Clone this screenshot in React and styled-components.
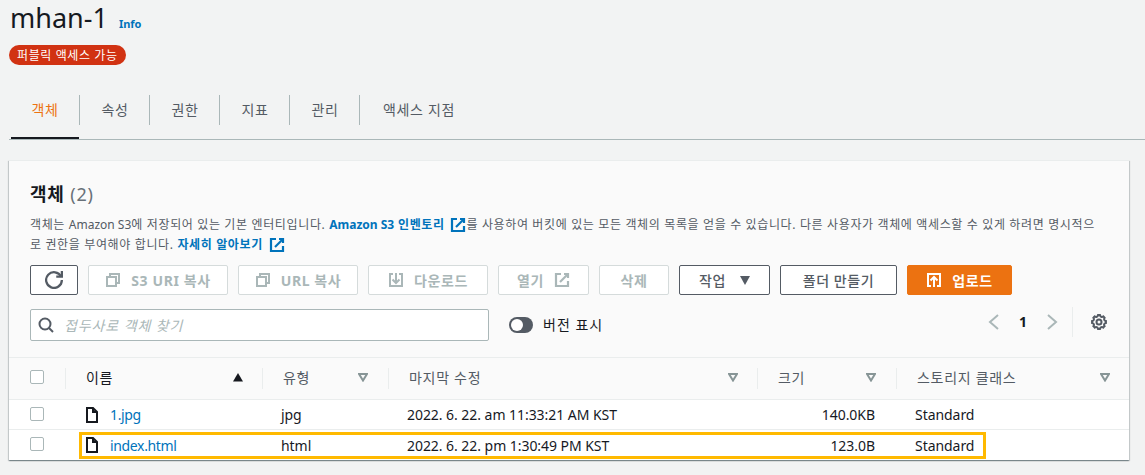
import React from 'react';
import styled, { createGlobalStyle } from 'styled-components';

const FONT = '"Noto Sans", "Noto Sans CJK KR", sans-serif';
const COLUMNS = '56px 197px 126px 369px 139px 1fr';

const GlobalStyle = createGlobalStyle`
  html, body {
    margin: 0;
    height: 475px;
    overflow: hidden;
    background: #f2f3f3;
    font-family: ${FONT};
    color: #16191f;
  }
  * { box-sizing: border-box; }
`;

const Page = styled.div`
  width: 1145px;
  height: 475px;
  padding-left: 9px;
  overflow: hidden;
`;

const TitleRow = styled.div`
  display: flex;
  align-items: flex-end;
  gap: 11px;
  height: 36px;
`;

const Title = styled.h1`
  margin: 0;
  font-size: 27px;
  line-height: 36px;
  font-weight: 400;
  padding-left: 1px;
`;

const Info = styled.a`
  font-size: 11px;
  font-weight: 700;
  line-height: 20px;
  margin-bottom: 2px;
  color: #0073bb;
`;

const Badge = styled.div`
  display: inline-flex;
  align-items: center;
  height: 20px;
  margin-top: 9px;
  padding: 0 8px;
  border-radius: 10px;
  background: #d13212;
  color: #fff;
  font-size: 12px;
  letter-spacing: 0.6px;
`;

const Tabs = styled.div`
  display: flex;
  height: 45px;
  margin-top: 30px;
  padding-left: 2px;
  border-bottom: 1px solid #aab7b8;
`;

const Tab = styled.div`
  width: ${p => p.$width}px;
  height: 44px;
  padding-bottom: ${p => (p.$active ? 14 : 16)}px;
  padding-left: ${p => (p.$active ? 0 : 2)}px;
  display: flex;
  align-items: center;
  justify-content: center;
  position: relative;
  font-size: 14px;
  letter-spacing: 0.7px;
  color: ${p => (p.$active ? '#ec7211' : '#545b64')};
  border-bottom: ${p => (p.$active ? '2px solid #16191f' : '0')};
  &::after {
    content: '';
    display: ${p => (p.$last ? 'none' : 'block')};
    position: absolute;
    right: -1px;
    top: 0;
    height: 30px;
    border-right: 1px solid #aab7b8;
  }
`;

const Card = styled.section`
  width: 1120px;
  height: 300px;
  margin-top: 20px;
  background: #fafafa;
  border-top: 1px solid #eaeded;
  box-shadow: 0 1px 1px 0 rgba(0, 28, 36, 0.3), 1px 1px 1px 0 rgba(0, 28, 36, 0.15),
    -1px 1px 1px 0 rgba(0, 28, 36, 0.15);
`;

const CardHead = styled.div`
  height: 196px;
  padding: 19px 21px 0;
`;

const CardTitle = styled.h2`
  margin: 0;
  font-size: 18px;
  line-height: 28px;
  font-weight: 700;
  letter-spacing: 0.8px;
  span {
    font-weight: 400;
    color: #687078;
  }
`;

const Description = styled.p`
  margin: 7px 0 0;
  font-size: 12px;
  line-height: 20px;
  color: #545b64;
  letter-spacing: 0.64px;
  white-space: nowrap;
  a {
    color: #0073bb;
    font-weight: 700;
  }
  svg {
    margin: 0 0 0 2px;
    vertical-align: -4px;
  }
`;

const Latin = styled.span`
  letter-spacing: 0;
`;

const Actions = styled.div`
  display: flex;
  gap: 10px;
  margin-top: 10px;
`;

const Button = styled.button`
  height: 30px;
  width: ${p => p.$width}px;
  padding: 0;
  display: flex;
  align-items: center;
  justify-content: center;
  gap: ${p => p.$gap || 10}px;
  border-radius: 2px;
  border: 1px solid ${p => (p.$disabled ? '#d5dbdb' : p.$primary ? '#ec7211' : '#545b64')};
  background: ${p => (p.$primary ? '#ec7211' : '#fff')};
  color: ${p => (p.$disabled ? '#aab7b8' : p.$primary ? '#fff' : '#545b64')};
  font-family: ${FONT};
  font-size: 14px;
  letter-spacing: 0.6px;
  font-weight: ${p => (p.$primary || p.$disabled ? 700 : 500)};
`;

const FilterRow = styled.div`
  display: flex;
  align-items: center;
  margin-top: 14px;
  height: 32px;
`;

const Search = styled.div`
  width: 459px;
  height: 32px;
  display: flex;
  align-items: center;
  gap: 10px;
  padding-left: 7px;
  background: #fff;
  border: 1px solid #aab7b8;
  border-radius: 2px;
  color: #545b64;
`;

const Placeholder = styled.span`
  font-size: 14px;
  font-style: italic;
  letter-spacing: 0.9px;
  color: #aab7b8;
`;

const Toggle = styled.div`
  width: 24px;
  height: 16px;
  margin-left: 20px;
  border-radius: 8px;
  background: #545b64;
  padding: 2px;
  &::before {
    content: '';
    display: block;
    width: 12px;
    height: 12px;
    border-radius: 50%;
    background: #fff;
  }
`;

const ToggleLabel = styled.span`
  margin-left: 10px;
  font-size: 14px;
  letter-spacing: 1px;
  margin-bottom: 2px;
`;

const Pager = styled.div`
  margin-left: auto;
  margin-right: 1px;
  display: flex;
  align-items: center;
  margin-top: -7px;
  color: #aab7b8;
`;

const PageNumber = styled.span`
  width: 42px;
  text-align: center;
  font-size: 14px;
  font-weight: 700;
  color: #16191f;
`;

const Separator = styled.div`
  width: 1px;
  height: 30px;
  margin-left: 12px;
  margin-right: 18px;
  background: #eaeded;
`;

const GearButton = styled.div`
  display: flex;
  color: #545b64;
`;

const HeaderRow = styled.div`
  display: grid;
  grid-template-columns: ${COLUMNS};
  align-items: center;
  height: 43px;
  border-top: 1px solid #eaeded;
  border-bottom: 1px solid #eaeded;
`;

const CheckCell = styled.div`
  display: flex;
  padding-left: 21px;
  padding-bottom: ${p => p.$lift || 0}px;
`;

const Checkbox = styled.div`
  width: 14px;
  height: 14px;
  border: 1px solid #aab7b8;
  border-radius: 2px;
  background: #fff;
`;

const HeadCell = styled.div`
  display: flex;
  align-items: center;
  justify-content: space-between;
  height: 21px;
  padding-left: 20px;
  padding-right: ${p => p.$pad}px;
  padding-bottom: 3px;
  font-size: 14px;
  letter-spacing: 0.7px;
  color: #545b64;
  border-left: ${p => (p.$sep ? '1px solid #eaeded' : '0')};
  &.active { color: #16191f; }
`;

const Row = styled.div`
  display: grid;
  grid-template-columns: ${COLUMNS};
  align-items: center;
  position: relative;
  height: 30px;
  background: #fff;
  border-bottom: ${p => (p.$last ? '0' : '1px solid #eaeded')};
  font-size: 14px;
`;

const Cell = styled.div`
  padding-left: 19px;
  color: #16191f;
  letter-spacing: -0.05px;
`;

const SizeCell = styled(Cell)`
  padding: 0 21px 0 0;
  text-align: right;
`;

const NameCell = styled(Cell)`
  display: flex;
  align-items: center;
  gap: 10px;
  a {
    color: #0073bb;
    letter-spacing: -0.35px;
  }
`;

// yellow marker drawn over the second row
const Highlight = styled.div`
  position: absolute;
  left: 70px;
  top: 2px;
  width: 907px;
  height: 27px;
  border: 3px solid #ffb900;
  pointer-events: none;
`;

function Icon({ size = 16, width = 2, children }) {
  return (
    <svg width={size} height={size} viewBox="0 0 16 16" fill="none" stroke="currentColor" strokeWidth={width}>
      {children}
    </svg>
  );
}

const External = ({ size = 16 }) => (
  <Icon size={size} width={2.2}>
    <path d="M10 2h4v4" />
    <path d="M6 10l8-8" />
    <path d="M14 9v5H2V2h5" />
  </Icon>
);

const Copy = () => (
  <Icon>
    <path d="M2 5h9v9H2z" />
    <path d="M5 5V2h9v9h-3" />
  </Icon>
);

const FileIcon = () => (
  <Icon>
    <path d="M9 1H3v14h10V5z" />
    <path d="M9 1v4h4" />
  </Icon>
);

const SortDown = () => (
  <svg width="10" height="9" viewBox="0 0 10 9">
    <path d="M1 1h8L5 7.500z" fill="none" stroke="#879596" strokeWidth="2" />
  </svg>
);

const SortUp = () => (
  <svg width="10" height="9" viewBox="0 0 10 9">
    <path d="M5 0l5 8.500H0z" fill="#16191f" />
  </svg>
);

const files = [
  { name: '1.jpg', type: 'jpg', date: '2022. 6. 22. am 11:33:21 AM KST', size: '140.0KB' },
  { name: 'index.html', type: 'html', date: '2022. 6. 22. pm 1:30:49 PM KST', size: '123.0B', marked: true },
];

export default function App() {
  return (
    <Page>
      <GlobalStyle />
      <TitleRow>
        <Title>mhan-1</Title>
        <Info>Info</Info>
      </TitleRow>
      <Badge>퍼블릭 액세스 가능</Badge>
      <Tabs>
        <Tab $width={68} $active>객체</Tab>
        <Tab $width={70}>속성</Tab>
        <Tab $width={70}>권한</Tab>
        <Tab $width={70}>지표</Tab>
        <Tab $width={70}>관리</Tab>
        <Tab $width={118} $last>액세스 지점</Tab>
      </Tabs>
      <Card>
        <CardHead>
          <CardTitle>객체 <span>(2)</span></CardTitle>
          <Description>
            객체는 <Latin>Amazon S3</Latin>에 저장되어 있는 기본 엔터티입니다. <a><Latin>Amazon S3</Latin> 인벤토리 <External /></a>를 사용하여 버킷에 있는 모든 객체의 목록을 얻을 수 있습니다. 다른 사용자가 객체에 액세스할 수 있게 하려면 명시적으
            <br />
            로 권한을 부여해야 합니다. <a>자세히 알아보기 <External /></a>
          </Description>
          <Actions>
            <Button $width={48} aria-label="새로 고침">
              <Icon size={18}>
                <path d="M10 5h5V0" />
                <path d="M15 8a7 7 0 1 1-.7-3" />
              </Icon>
            </Button>
            <Button $width={140} $disabled><Copy />S3 URI 복사</Button>
            <Button $width={120} $disabled><Copy />URL 복사</Button>
            <Button $width={120} $disabled>
              <Icon>
                <path d="M5 2H2v12h12V2h-3" />
                <path d="M4.500 7.500L8 11l3.500-3.500" />
                <path d="M8 11V1" />
              </Icon>
              다운로드
            </Button>
            <Button $width={91} $disabled $gap={10}>열기 <External /></Button>
            <Button $width={70} $disabled>삭제</Button>
            <Button $width={91} $gap={14}>
              작업
              <svg width="10" height="9" viewBox="0 0 10 9"><path d="M0 0h10L5 9z" fill="currentColor" /></svg>
            </Button>
            <Button $width={117}>폴더 만들기</Button>
            <Button $width={105} $primary $gap={10}>
              <Icon>
                <path d="M5 14H2V2h12v12h-3" />
                <path d="M4.500 8.500L8 5l3.500 3.500" />
                <path d="M8 5v10" />
              </Icon>
              업로드
            </Button>
          </Actions>
          <FilterRow>
            <Search>
              <Icon>
                <circle cx="7" cy="7" r="5.500" />
                <path d="M11 11l4 4" />
              </Icon>
              <Placeholder>접두사로 객체 찾기</Placeholder>
            </Search>
            <Toggle />
            <ToggleLabel>버전 표시</ToggleLabel>
            <Pager>
              <Icon size={16}><path d="M12 1L4 8l8 7" /></Icon>
              <PageNumber>1</PageNumber>
              <Icon size={16}><path d="M4 1l8 7-8 7" /></Icon>
              <Separator />
              <GearButton>
                <Icon size={16}>
                  <path d="M13.300 5.800a1.900 1.900 0 0 1 .300-2 7 7 0 0 0-1.400-1.400 1.900 1.900 0 0 1-3.200-1.300 7 7 0 0 0-2 0 1.900 1.900 0 0 1-3.200 1.300 7 7 0 0 0-1.400 1.400 1.900 1.900 0 0 1-1.300 3.200 7 7 0 0 0 0 2 1.900 1.900 0 0 1 1.300 3.200 7 7 0 0 0 1.400 1.400 1.900 1.900 0 0 1 3.200 1.300 7 7 0 0 0 2 0 1.900 1.900 0 0 1 3.200-1.300 7 7 0 0 0 1.400-1.400 1.900 1.900 0 0 1 1.300-3.200 7 7 0 0 0 0-2 1.900 1.900 0 0 1-1.600-1.200z" />
                  <circle cx="8" cy="8" r="2.500" />
                </Icon>
              </GearButton>
            </Pager>
          </FilterRow>
        </CardHead>
        <HeaderRow>
          <CheckCell $lift={3}><Checkbox /></CheckCell>
          <HeadCell $sep $pad={19} className="active">이름 <SortUp /></HeadCell>
          <HeadCell $sep $pad={20}>유형 <SortDown /></HeadCell>
          <HeadCell $sep $pad={19}>마지막 수정 <SortDown /></HeadCell>
          <HeadCell $sep $pad={20}>크기 <SortDown /></HeadCell>
          <HeadCell $sep $pad={19}>스토리지 클래스 <SortDown /></HeadCell>
        </HeaderRow>
        {files.map(file => (
          <Row key={file.name} $last={file.marked}>
            <CheckCell $lift={file.marked ? 2 : 1}><Checkbox /></CheckCell>
            <NameCell><FileIcon /><a>{file.name}</a></NameCell>
            <Cell>{file.type}</Cell>
            <Cell>{file.date}</Cell>
            <SizeCell>{file.size}</SizeCell>
            <Cell>Standard</Cell>
            {file.marked && <Highlight />}
          </Row>
        ))}
      </Card>
    </Page>
  );
}
